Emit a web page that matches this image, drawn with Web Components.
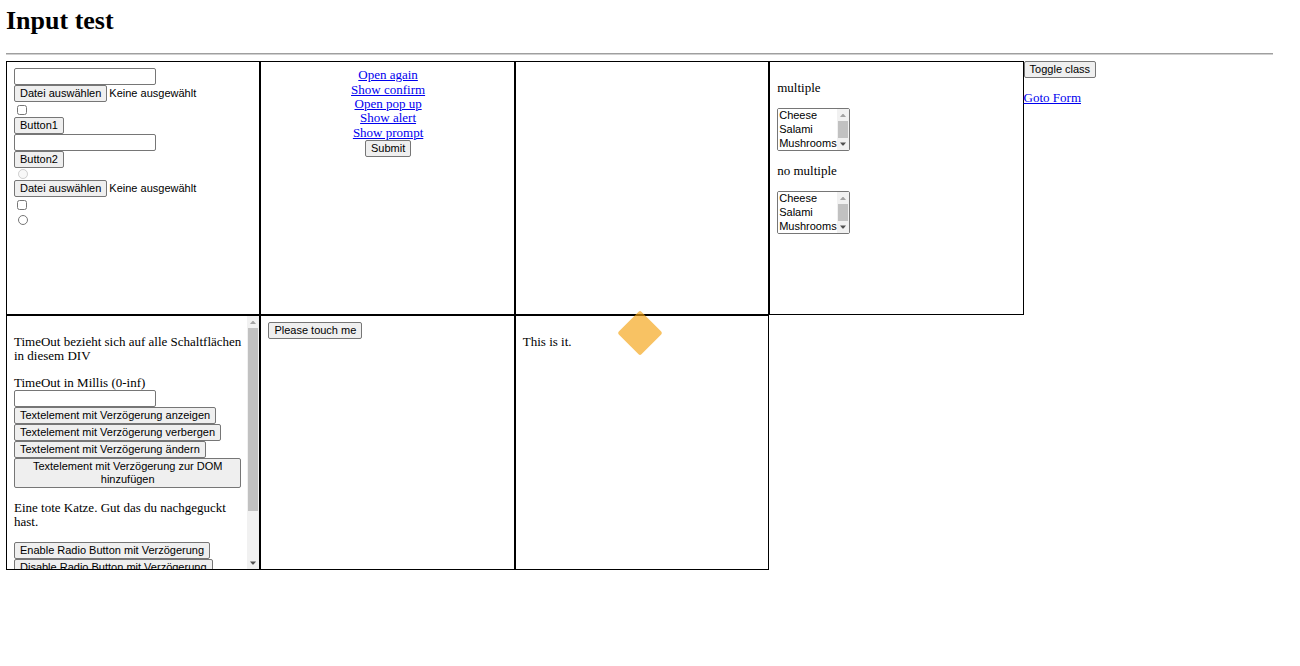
<!DOCTYPE html>
<html lang="de">
<head>
<meta charset="utf-8">
<title>Input test</title>
<style>
  body { margin: 6px 27px 6px 6px; background: #fff; color: #000; font: 13px/14px "Liberation Serif", serif; }
</style>
</head>
<body>
<input-test-page></input-test-page>

<script>
const controls = `
  *, *::before { box-sizing: border-box; }
  p { margin: 13px 0; }
  a { color: #0000ee; }
  button, input, select { font: 11px/13px "Liberation Sans", sans-serif; color: #000; margin: 0; }
  button { display: inline-block; min-height: 17px; padding: 1px 5px; border: 1px solid #767676; border-radius: 2px; background: #efefef; text-align: center; vertical-align: top; }
  .text { display: block; width: 142px; height: 17px; padding: 1px; border: 1px solid #767676; border-radius: 2px; background: #fff; }
  .stack { display: flex; flex-direction: column; align-items: flex-start; }
`;

function define(name, css, html, setup) {
  const template = document.createElement('template');
  template.innerHTML = `<style>${css}</style>${html}`;
  customElements.define(name, class extends HTMLElement {
    constructor() {
      super();
      this.attachShadow({ mode: 'open' }).append(template.content.cloneNode(true));
      if (setup) setup(this.shadowRoot);
    }
  });
}

// Vertical scroll bar; --thumb sets the share of the track that the thumb fills.
define('scroll-bar', `
  :host { display: flex; flex-direction: column; width: 12px; background: #f1f1f1; }
  svg { flex: none; display: block; width: 12px; height: 12px; }
  .track { flex: 1; min-height: 0; padding: 0 1px; }
  .thumb { height: var(--thumb, 100%); background: #c1c1c1; }
`, `
  <svg viewBox="0 0 12 12" aria-hidden="true"><path d="M3 8 5.500 5h1L9 8Z" fill="#a3a3a3"/></svg>
  <div class="track"><div class="thumb"></div></div>
  <svg viewBox="0 0 12 12" aria-hidden="true"><path d="M3 4.500h6L6.500 7.500h-1Z" fill="#505050"/></svg>`);

define('test-panel', `
  :host { display: flex; box-sizing: border-box; min-width: 0; aspect-ratio: 1; border: 1px solid #000; overflow: hidden; }
  .body { flex: 1; min-width: 0; box-sizing: border-box; height: 100%; padding: 6px 6px 6px 7px; overflow: auto; scrollbar-width: none; }
  scroll-bar { display: none; --thumb: 80%; }
  :host([scrolls]) .body { padding-bottom: 57px; }
  :host([scrolls]) scroll-bar { display: flex; }
`, `<div class="body"><slot></slot></div><scroll-bar></scroll-bar>`);

define('file-picker', `
  ${controls}
  :host { display: flex; align-items: center; gap: 2px; font: 11px/13px "Liberation Sans", sans-serif; }
`, `<input type="file" hidden aria-label="Datei"><button type="button">Datei auswählen</button><span>Keine ausgewählt</span>`,
(root) => {
  const input = root.querySelector('input');
  root.querySelector('button').addEventListener('click', () => input.click());
  input.addEventListener('change', () => {
    root.querySelector('span').textContent = input.files.length ? input.files[0].name : 'Keine ausgewählt';
  });
});

define('input-fields', `
  ${controls}
  :host { display: block; }
  .tick { display: flex; align-items: center; height: 15px; padding-left: 3px; }
  .tick.tight { height: 12px; }
  .tick.tight, .tick.radio { padding-left: 4px; }
  .tick input { width: 10px; height: 10px; }
`, `
  <div class="stack">
    <input class="text" type="text" aria-label="Text 1">
    <file-picker></file-picker>
    <div class="tick"><input type="checkbox" aria-label="Checkbox 1"></div>
    <button type="button">Button1</button>
    <input class="text" type="text" aria-label="Text 2">
    <button type="button">Button2</button>
    <div class="tick tight"><input type="radio" disabled aria-label="Radio 1"></div>
    <file-picker></file-picker>
    <div class="tick"><input type="checkbox" aria-label="Checkbox 2"></div>
    <div class="tick radio"><input type="radio" aria-label="Radio 2"></div>
  </div>`);

define('dialog-links', `
  ${controls}
  :host { display: block; text-align: center; }
  nav { display: grid; grid-auto-rows: 1fr; justify-items: center; align-items: center; height: 72px; }
`, `
  <nav>
    <a href="#again">Open again</a>
    <a href="#confirm">Show confirm</a>
    <a href="#popup">Open pop up</a>
    <a href="#alert">Show alert</a>
    <a href="#prompt">Show prompt</a>
  </nav>
  <button type="submit">Submit</button>`);

define('topping-list', `
  ${controls}
  :host { display: block; }
  label { display: block; margin: 13px 0; }
  .box { position: relative; width: 73px; }
  select { display: block; width: 100%; height: 43px; padding: 0; border: 1px solid #767676; border-radius: 2px; background: #fff; scrollbar-width: none; }
  option { min-height: 0; height: 14px; padding: 0 0 0 1px; line-height: 14px; }
  scroll-bar { position: absolute; top: 1px; right: 1px; bottom: 1px; pointer-events: none; }
`, `
  <label for="list"><slot></slot></label>
  <div class="box">
    <select id="list" size="3">
      <option>Cheese</option><option>Salami</option><option>Mushrooms</option><option>Onions</option>
    </select>
    <scroll-bar></scroll-bar>
  </div>`);

define('timeout-form', `
  ${controls}
  :host { display: block; }
  label { display: block; }
`, `
  <p>TimeOut bezieht sich auf alle Schaltflächen in diesem DIV</p>
  <div class="stack">
    <label for="millis">TimeOut in Millis (0-inf)</label>
    <input class="text" id="millis" type="text">
    <button type="button">Textelement mit Verzögerung anzeigen</button>
    <button type="button">Textelement mit Verzögerung verbergen</button>
    <button type="button">Textelement mit Verzögerung ändern</button>
    <button type="button">Textelement mit Verzögerung zur DOM hinzufügen</button>
  </div>
  <p>Eine tote Katze. Gut das du nachgeguckt hast.</p>
  <div class="stack">
    <button type="button">Enable Radio Button mit Verzögerung</button>
    <button type="button">Disable Radio Button mit Verzögerung</button>
  </div>`);

define('floating-diamond', `
  :host { position: fixed; top: 50%; left: calc(50% - 10px); width: 46px; height: 46px; margin: -23px 0 0 -23px; pointer-events: none; }
  svg { display: block; width: 100%; height: 100%; }
`, `<svg viewBox="0 0 46 46" aria-hidden="true"><rect x="7" y="7" width="32" height="32" rx="2" fill="#f5a210" fill-opacity=".65" transform="rotate(45 23 23)"/></svg>`);

define('input-test-page', `
  ${controls}
  :host { display: block; }
  h1 { margin: 0 0 17px; font-size: 26px; line-height: 30px; }
  hr { height: 2px; margin: 0 0 6px; border: 0 solid; border-width: 1px 0; border-top-color: #9f9f9f; border-bottom-color: #d0d0d0; }
  main { display: grid; grid-template-columns: repeat(4, 51fr) 50fr; align-items: start; }
  aside { min-width: 0; }
`, `
  <h1>Input test</h1>
  <hr>
  <main>
    <test-panel><input-fields></input-fields></test-panel>
    <test-panel><dialog-links></dialog-links></test-panel>
    <test-panel></test-panel>
    <test-panel><topping-list>multiple</topping-list><topping-list>no multiple</topping-list></test-panel>
    <aside><button type="button">Toggle class</button><p><a href="#form">Goto Form</a></p></aside>
    <test-panel scrolls><timeout-form></timeout-form></test-panel>
    <test-panel><button type="button">Please touch me</button></test-panel>
    <test-panel><p>This is it.</p></test-panel>
  </main>
  <floating-diamond></floating-diamond>`);
</script>
</body>
</html>
